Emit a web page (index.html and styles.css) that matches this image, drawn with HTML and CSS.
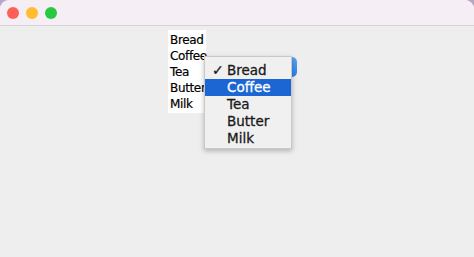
FILE: index.html
```html
<!DOCTYPE html>
<html>
<head>
<meta charset="utf-8">
<link rel="stylesheet" href="styles.css">
</head>
<body>
<div class="window">
  <div class="titlebar">
    <span class="light red"></span>
    <span class="light yellow"></span>
    <span class="light green"></span>
  </div>
  <div class="content">
    <div class="row">
      <ul class="list">
        <li>Bread</li>
        <li>Coffee</li>
        <li>Tea</li>
        <li>Butter</li>
        <li>Milk</li>
      </ul>
      <div class="combo">
        <div class="combo-button"></div>
        <ul class="popup">
          <li><span class="check">✓</span>Bread</li>
          <li class="selected">Coffee</li>
          <li>Tea</li>
          <li>Butter</li>
          <li>Milk</li>
        </ul>
      </div>
    </div>
  </div>
</div>
</body>
</html>
```

FILE: styles.css
```css
html, body {
  margin: 0;
  padding: 0;
  width: 474px;
  height: 257px;
  overflow: hidden;
  background: #b9a6c4;
}
body {
  font-family: "DejaVu Sans", Verdana, sans-serif;
}
.window {
  width: 474px;
  height: 257px;
  border-radius: 9px 9px 0 0;
  overflow: hidden;
  background: #eeeeee;
  display: flex;
  flex-direction: column;
}
.titlebar {
  height: 26px;
  background: #f5eef5;
  border-bottom: 1px solid #d6d3d6;
  display: flex;
  align-items: center;
  gap: 7px;
  padding-left: 7px;
  box-sizing: border-box;
  flex-shrink: 0;
}
.light {
  width: 12px;
  height: 12px;
  border-radius: 50%;
  display: block;
}
.red { background: #fe5f57; }
.yellow { background: #febc2e; }
.green { background: #28c840; }
.content {
  flex: 1;
  background: #eeeeee;
  padding-top: 4px;
}
.row {
  display: flex;
  padding-left: 168px;
}
ul {
  list-style: none;
  margin: 0;
  padding: 0;
}
.list {
  background: #ffffff;
  width: 38px;
  padding: 2px 0 1px 2px;
  box-sizing: border-box;
  font-size: 12px;
  letter-spacing: -0.35px;
  color: #000;
  -webkit-text-stroke: 0.2px #000;
}
.list li {
  height: 16px;
  line-height: 16px;
  white-space: nowrap;
}
.combo {
  position: relative;
  width: 92px;
  height: 20px;
  margin-top: 27px;
}
.combo-button {
  position: absolute;
  left: 0;
  top: 0;
  width: 91px;
  height: 20px;
  border-radius: 5px;
  background: linear-gradient(#5aa2f5, #2a7fe8);
}
.popup {
  position: absolute;
  left: -2px;
  top: -1px;
  width: 88px;
  height: 93px;
  box-sizing: border-box;
  background: #f0f0f0;
  border: 1px solid #c9c9c9;
  box-shadow: 0 2px 5px rgba(0,0,0,0.25);
  padding-top: 5px;
  font-size: 13.5px;
  color: #1a1a1a;
  -webkit-text-stroke: 0.3px #1a1a1a;
}
.popup li {
  height: 17px;
  line-height: 17px;
  padding-left: 22px;
  position: relative;
  white-space: nowrap;
}
.popup li.selected {
  background: #1c66d4;
  color: #ffffff;
  -webkit-text-stroke: 0.3px #ffffff;
}
.check {
  position: absolute;
  left: 7px;
  top: 0;
  font-size: 14px;
  font-weight: bold;
}
```
